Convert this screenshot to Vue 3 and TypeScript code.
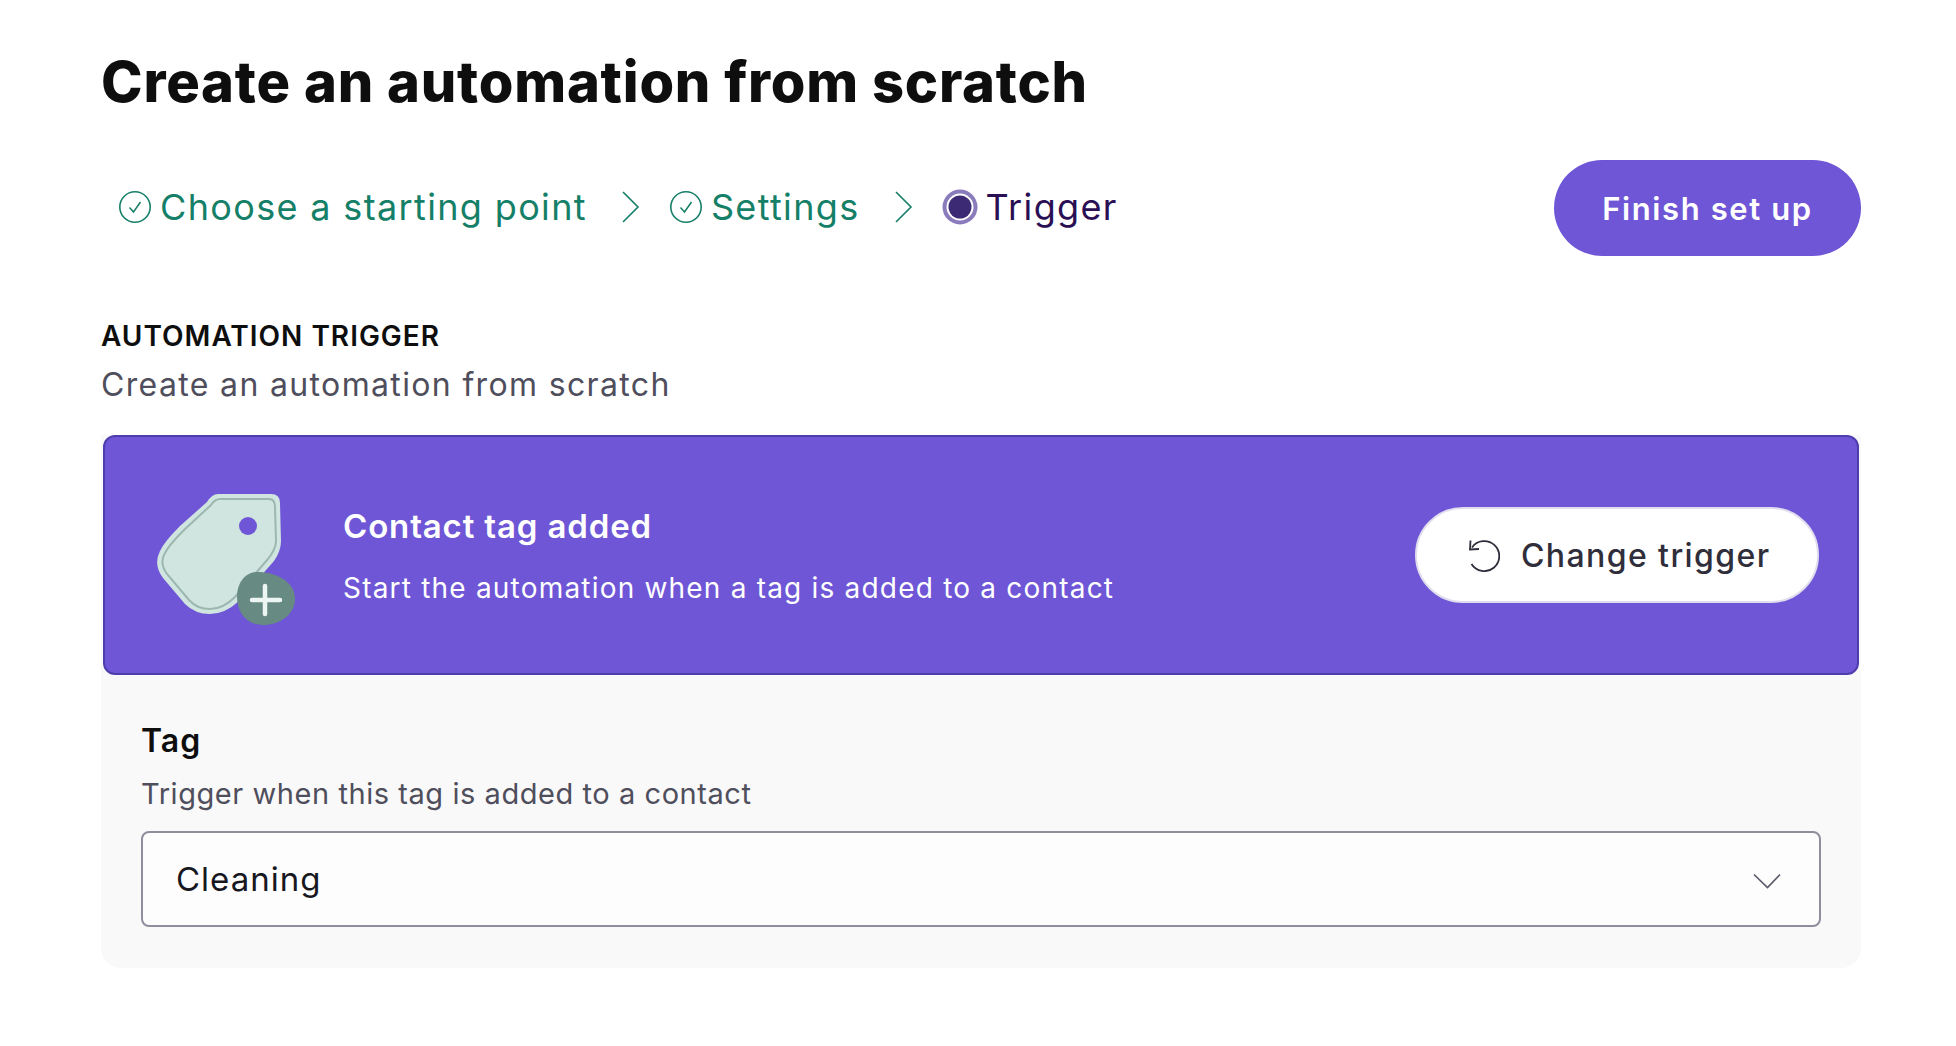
<script setup lang="ts">
interface Step { label: string; state: 'done' | 'current' }
const steps: Step[] = [
  { label: 'Choose a starting point', state: 'done' },
  { label: 'Settings', state: 'done' },
  { label: 'Trigger', state: 'current' },
]
</script>

<template>
  <main class="page">
    <h1 class="title">Create an automation from scratch</h1>

    <div class="toolbar">
      <ol class="steps">
        <li v-for="(s, i) in steps" :key="s.label" class="step" :class="s.state">
          <svg v-if="s.state === 'done'" class="st-ico" width="34" height="34" viewBox="0 0 34 34" fill="none">
            <circle cx="17" cy="17" r="15.2" stroke="#157f68" stroke-width="1.6" />
            <path d="M11.5 17.5l4 4.5 7-10" stroke="#157f68" stroke-width="1.5" />
          </svg>
          <svg v-else class="st-ico" width="36" height="36" viewBox="0 0 36 36" fill="none">
            <circle cx="18" cy="18" r="15.5" stroke="#8a7cbc" stroke-width="4" />
            <circle cx="18" cy="18" r="11.5" fill="#3d2a75" />
          </svg>
          <span class="st-label">{{ s.label }}</span>
          <svg v-if="i < steps.length - 1" class="chev" width="20" height="34" viewBox="0 0 20 34" fill="none">
            <path d="M2 2l15 15L2 32" stroke="#157f68" stroke-width="1.6" />
          </svg>
        </li>
      </ol>
      <button class="finish" type="button">Finish set up</button>
    </div>

    <div class="head">
      <h2 class="eyebrow">AUTOMATION TRIGGER</h2>
      <p class="sub">Create an automation from scratch</p>
    </div>

    <section class="panel">
      <div class="hero">
        <svg class="tag-ico" width="145" height="140" viewBox="0 0 145 140" fill="none">
          <path d="M63 5H116Q125 5 125 14L126 52Q126 62 119 72L84 112Q70 125 55 125Q40 125 30 115L8 89Q-2 76 5 62Q9 53 25 37L52 13Q57 5 63 5Z" fill="#d0e5df" />
          <path d="M65 10H114Q120 10 120 18L121 52Q121 60 113 70L80 108Q68 120 55 120Q42 120 34 111L12 85Q4 74 10 64Q14 56 29 41L56 16Q60 10 65 10Z" stroke="#9bb7b0" stroke-width="2" />
          <circle cx="93" cy="37" r="9" fill="#6e56d6" />
          <path d="M103 83C120 83 140 92 140 110C140 126 124 136 108 136C92 136 82 124 82 108C82 94 90 83 103 83Z" fill="#678a83" />
          <path d="M97 111H125M110 97V125" stroke="#eef6f3" stroke-width="4.5" stroke-linecap="round" />
        </svg>
        <div class="hero-text">
          <h3 class="hero-title">Contact tag added</h3>
          <p class="hero-desc">Start the automation when a tag is added to a contact</p>
        </div>
        <button class="change" type="button">
          <svg width="34" height="34" viewBox="0 0 34 34" fill="none">
            <path d="M6 9.5A15 15 0 1 1 5.5 26" stroke="#2f2e3a" stroke-width="1.8" />
            <path d="M4.5 2.5L4 11.5L13 11" stroke="#2f2e3a" stroke-width="1.8" />
          </svg>
          <span>Change trigger</span>
        </button>
      </div>

      <div class="field">
        <label class="f-label">Tag</label>
        <p class="f-help">Trigger when this tag is added to a contact</p>
        <div class="select">
          <span>Cleaning</span>
          <svg class="caret" width="28" height="16" viewBox="0 0 28 16" fill="none">
            <path d="M1 1.5l13.5 13L27 1.5" stroke="#5c5b6b" stroke-width="1.7" />
          </svg>
        </div>
      </div>
    </section>
  </main>
</template>

<style>
html, body { background: #fff; }
</style>

<style scoped>
.page {
  box-sizing: border-box;
  width: 1956px;
  height: 1046px;
  padding: 46px 95px 0 101px;
  font-family: Inter, "Liberation Sans", sans-serif;
  overflow: hidden;
}
.title {
  margin: 0;
  font-size: 56px;
  line-height: 72px;
  font-weight: 800;
  letter-spacing: 0.78px;
  color: #0e0e0e;
}
.toolbar {
  display: flex;
  align-items: center;
  justify-content: space-between;
  margin-top: 42px;
}
.steps {
  display: flex;
  list-style: none;
  margin: -2px 0 0;
  padding: 0 0 0 17px;
  align-items: center;
}
.step {
  display: flex;
  align-items: center;
  font-size: 36px;
  letter-spacing: 1.35px;
  color: #157f68;
}
.st-label { margin-left: 8px; }
.step.current { color: #2b0f55; }
.chev { margin: 0 28px 0 34px; }
.step.current .st-label { margin-left: 8px; }
.finish {
  width: 307px;
  height: 96px;
  border: 0;
  border-radius: 48px;
  background: #6e56d6;
  color: #fff;
  font: 600 31px Inter, "Liberation Sans", sans-serif;
  letter-spacing: 1.6px;
}
.head { margin-top: 60px; }
.eyebrow {
  margin: 0;
  font-size: 28px;
  line-height: 40px;
  font-weight: 600;
  letter-spacing: 1px;
  color: #0e0e0e;
}
.sub {
  margin: 9px 0 0;
  font-size: 32px;
  line-height: 40px;
  letter-spacing: 1.35px;
  color: #4f4e5c;
}
.panel {
  margin-top: 30px;
  background: #f9f9f9;
  border-radius: 0 0 20px 20px;
}
.hero {
  box-sizing: border-box;
  margin: 0 2px;
  height: 240px;
  display: flex;
  align-items: center;
  padding: 0 38px 0 50px;
  background: #6e56d6;
  border: 2px solid #4e3ead;
  border-radius: 12px;
}
.tag-ico { flex: none; margin-top: 8px; }
.hero-text { flex: 1; margin-left: 43px; padding-top: 3px; color: #fff; }
.hero-title {
  margin: 0;
  font-size: 33px;
  line-height: 40px;
  font-weight: 600;
  letter-spacing: 0.85px;
}
.hero-desc {
  margin: 22px 0 0;
  font-size: 28px;
  line-height: 40px;
  letter-spacing: 1.2px;
}
.change {
  box-sizing: border-box;
  display: flex;
  align-items: center;
  gap: 21px;
  width: 404px;
  height: 96px;
  padding-left: 49px;
  border: 2px solid #e0ddee;
  border-radius: 48px;
  background: #fff;
  color: #2f2e3a;
  font: 500 32px Inter, "Liberation Sans", sans-serif;
  letter-spacing: 1.4px;
}
.field { padding: 46px 40px 41px 40px; }
.f-label {
  display: block;
  font-size: 32px;
  line-height: 40px;
  font-weight: 600;
  letter-spacing: 1px;
  color: #0e0e0e;
}
.f-help {
  margin: 13px 0 0;
  font-size: 29px;
  line-height: 40px;
  letter-spacing: 0.56px;
  color: #4f4e5c;
}
.select {
  box-sizing: border-box;
  display: flex;
  align-items: center;
  justify-content: space-between;
  height: 96px;
  margin-top: 17px;
  padding: 0 38px 0 33px;
  border: 2px solid #8f8e9c;
  border-radius: 8px;
  background: #fdfdfd;
  font-size: 33px;
  letter-spacing: 1px;
  color: #17171f;
}
.caret { margin-top: 3px; }
</style>
